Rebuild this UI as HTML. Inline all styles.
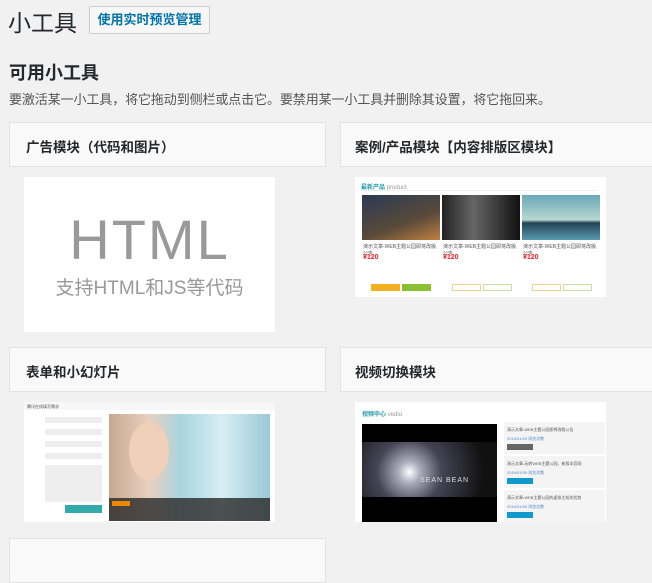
<!DOCTYPE html>
<html><head><meta charset="utf-8"><style>
*{margin:0;padding:0;box-sizing:border-box}
body{width:652px;height:544px;overflow:hidden;background:#f1f1f1;font-family:"Liberation Sans","Noto Sans CJK SC",sans-serif;color:#23282d;position:relative}
.a{position:absolute}
h1{position:absolute;left:8px;top:4px;font-size:23px;font-weight:400;color:#23282d}
.btn{position:absolute;left:89px;top:6px;width:121px;height:28px;border:1px solid #ccc;background:#f7f7f7;border-radius:2px;color:#0073aa;font-size:13px;font-weight:600;text-align:center;line-height:26px}
h2{position:absolute;left:9px;top:59px;font-size:18px;font-weight:700}
.desc{position:absolute;left:9px;top:89px;font-size:13px;color:#555;letter-spacing:-0.1px}
.card{position:absolute;background:#f9f9f9;border:1px solid #e3e3e3;height:45px;font-size:13.5px;font-weight:700;padding:13px 0 0 16px}
.img{position:absolute;background:#fff;overflow:hidden}
</style></head><body>
<h1>小工具</h1>
<div class="btn">使用实时预览管理</div>
<h2>可用小工具</h2>
<div class="desc">要激活某一小工具，将它拖动到侧栏或点击它。要禁用某一小工具并删除其设置，将它拖回来。</div>

<div class="card" style="left:9px;top:122px;width:317px">广告模块（代码和图片）</div>
<div class="card" style="left:340px;top:122px;width:320px;padding-left:14px">案例/产品模块【内容排版区模块】</div>

<div class="img" style="left:24px;top:177px;width:251px;height:155px">
 <div class="a" style="left:0;top:30px;width:251px;text-align:center;font-size:56px;color:#999;letter-spacing:2px">HTML</div>
 <div class="a" style="left:0;top:96px;width:251px;text-align:center;font-size:19px;color:#999">支持HTML和JS等代码</div>
</div>

<div class="img" style="left:355px;top:177px;width:251px;height:120px">
 <div class="a" style="left:6px;top:5px;font-size:6px;color:#29a"><b>最新产品</b> <span style="color:#999">product</span></div>
 <div class="a" style="left:6px;top:13px;width:235px;height:1px;background:#eee"></div>
 <div class="a" style="left:7px;top:18px;width:78px;height:45px;background:linear-gradient(160deg,#2a3a55,#5a4a3a 60%,#c08040)"></div>
 <div class="a" style="left:87px;top:18px;width:78px;height:45px;background:linear-gradient(90deg,#222,#666 40%,#111)"></div>
 <div class="a" style="left:167px;top:18px;width:78px;height:45px;background:linear-gradient(180deg,#6aa8b8,#b8d8d0 55%,#245 62%,#5a9ab0)"></div>
 <div class="a" style="left:8px;top:66px;font-size:5px;color:#555;width:75px">演示文章-WEB主题公园即将改版公告</div>
 <div class="a" style="left:88px;top:66px;font-size:5px;color:#555;width:75px">演示文章-WEB主题公园即将改版公告</div>
 <div class="a" style="left:168px;top:66px;font-size:5px;color:#555;width:75px">演示文章-WEB主题公园即将改版公告</div>
 <div class="a" style="left:8px;top:77px;font-size:7px;color:#e22;font-weight:700">¥120</div>
 <div class="a" style="left:88px;top:77px;font-size:7px;color:#e22;font-weight:700">¥120</div>
 <div class="a" style="left:168px;top:77px;font-size:7px;color:#e22;font-weight:700">¥120</div>
 <div class="a" style="left:16px;top:107px;width:29px;height:7px;background:#f5b020"></div>
 <div class="a" style="left:47px;top:107px;width:29px;height:7px;background:#8bc030"></div>
 <div class="a" style="left:97px;top:107px;width:29px;height:7px;border:1px solid #f5d090"></div>
 <div class="a" style="left:128px;top:107px;width:29px;height:7px;border:1px solid #c8e0a0"></div>
 <div class="a" style="left:177px;top:107px;width:29px;height:7px;border:1px solid #f5d090"></div>
 <div class="a" style="left:208px;top:107px;width:29px;height:7px;border:1px solid #c8e0a0"></div>
</div>

<div class="card" style="left:9px;top:347px;width:317px">表单和小幻灯片</div>
<div class="card" style="left:340px;top:347px;width:320px;padding-left:14px">视频切换模块</div>

<div class="img" style="left:24px;top:402px;width:251px;height:120px">
 <div class="a" style="left:0;top:0;width:251px;height:8px;background:#f6f8f8"></div>
 <div class="a" style="left:3px;top:2px;font-size:4px;color:#555">腾讯在线填写需求</div>
 <div class="a" style="left:21px;top:15px;width:57px;height:85px;background:linear-gradient(#eee 0 6px,#fff 6px 12px,#eee 12px 18px,#fff 18px 24px,#eee 24px 30px,#fff 30px 36px,#eee 36px 42px,#fff 42px 48px,#eee 48px)"></div>
 <div class="a" style="left:41px;top:103px;width:37px;height:8px;background:#3aa"></div>
 <div class="a" style="left:85px;top:12px;width:161px;height:107px;background:linear-gradient(90deg,#c8a890 0,#e8d0c0 25%,#a8d4e0 45%,#d8eef4 70%,#9cc8d8)"></div>
 <div class="a" style="left:105px;top:20px;width:40px;height:58px;border-radius:50%;background:#f0d0b8"></div>
 <div class="a" style="left:85px;top:96px;width:161px;height:23px;background:rgba(40,40,40,.8)"></div>
 <div class="a" style="left:88px;top:99px;width:18px;height:5px;background:#e80"></div>
</div>

<div class="img" style="left:355px;top:402px;width:251px;height:120px">
 <div class="a" style="left:7px;top:7px;font-size:6px;color:#29a"><b>视频中心</b> <span style="color:#999">vedio</span></div>
 <div class="a" style="left:7px;top:22px;width:135px;height:98px;background:#000"></div>
 <div class="a" style="left:7px;top:40px;width:135px;height:55px;background:radial-gradient(circle at 35% 55%,#fff 0,#aab 12%,#445 35%,#111 80%)"></div>
 <div class="a" style="left:65px;top:75px;font-size:7px;color:#ddd;letter-spacing:1px">SEAN BEAN</div>
 <div class="a" style="left:149px;top:20px;width:101px;height:32px;background:#f4f4f4"></div>
 <div class="a" style="left:149px;top:54px;width:101px;height:32px;background:#f4f4f4"></div>
 <div class="a" style="left:149px;top:88px;width:101px;height:32px;background:#f4f4f4"></div>
 <div class="a" style="left:152px;top:23px;font-size:4px;color:#555;line-height:9px">演示文章-WEB主题公园即将改版公告<br><span style="color:#58c">2016/01/09 浏览次数</span></div>
 <div class="a" style="left:152px;top:57px;font-size:4px;color:#555;line-height:9px">演示文章-玩转WEB主题公园，新版本官网<br><span style="color:#58c">2016/01/09 浏览次数</span></div>
 <div class="a" style="left:152px;top:91px;font-size:4px;color:#555;line-height:9px">演示文章-WEB主题公园的虚拟主机的优势<br><span style="color:#58c">2016/01/09 浏览次数</span></div>
 <div class="a" style="left:152px;top:42px;width:26px;height:6px;background:#666"></div>
 <div class="a" style="left:152px;top:76px;width:26px;height:6px;background:#19c"></div>
 <div class="a" style="left:152px;top:110px;width:26px;height:6px;background:#19c"></div>
</div>

<div class="card" style="left:9px;top:538px;width:317px"></div>
</body></html>
